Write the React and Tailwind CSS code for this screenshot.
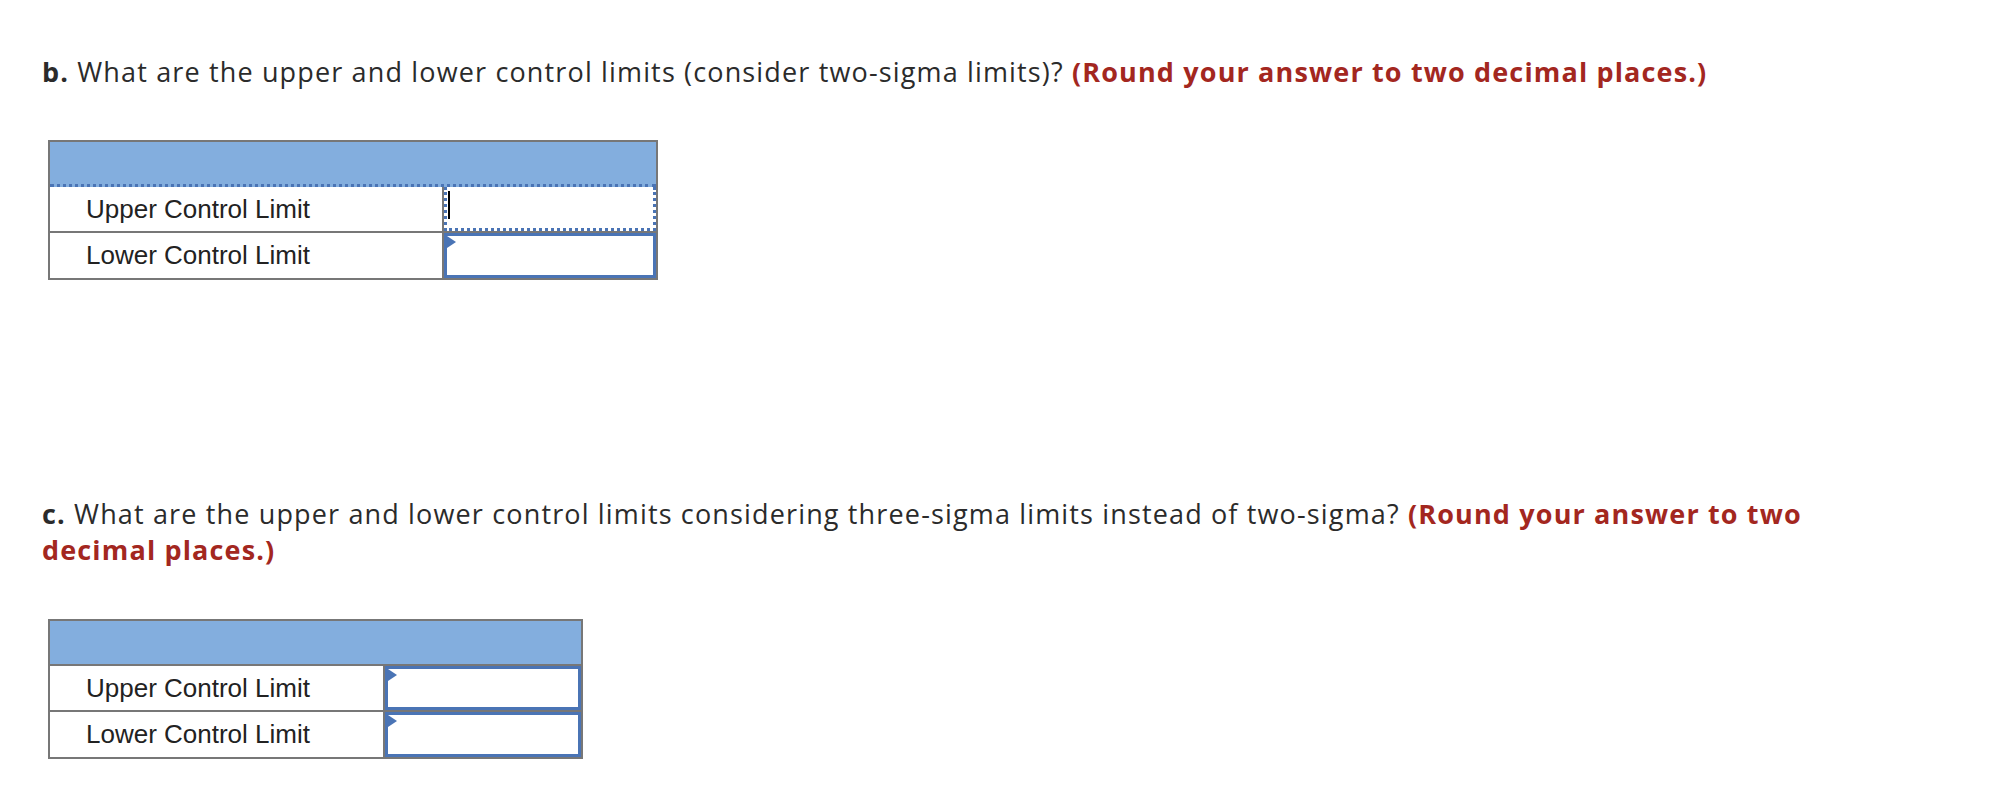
import React from 'react';

const Marker = () => (
  <span className="absolute left-0 top-0 w-0 h-0 border-t-[6px] border-b-[6px] border-l-[9px] border-t-transparent border-b-transparent border-l-[#4a74b5]"></span>
);

const InputCell = ({ focused }) =>
  focused ? (
    <div className="relative h-full border-[3px] border-dotted border-t-0 border-[#4a74b5] bg-white">
      <span className="absolute left-[1px] top-[4px] w-[2px] h-[28px] bg-black"></span>
    </div>
  ) : (
    <div className="relative h-full border-[3px] border-[#4a74b5] bg-white">
      <Marker />
    </div>
  );

const LimitTable = ({ width, labelWidth, focusFirst }) => (
  <div
    className="border-2 border-[#777777] bg-white"
    style={{ width: width }}
  >
    <div
      className={`h-[45px] bg-[#83aede] ${
        focusFirst ? 'border-b-[3px] border-dotted border-[#4a74b5]' : 'border-b-2 border-[#777777]'
      }`}
    ></div>
    <div className="flex h-[46px] border-b-2 border-[#777777]">
      <div
        className="flex items-center pl-[36px] text-[26px] text-[#222] border-r-2 border-[#777777]"
        style={{ width: labelWidth, fontFamily: '"Liberation Sans", Arial, sans-serif' }}
      >
        Upper Control Limit
      </div>
      <div className="flex-1">
        <InputCell focused={focusFirst} />
      </div>
    </div>
    <div className="flex h-[45px]">
      <div
        className="flex items-center pl-[36px] text-[26px] text-[#222] border-r-2 border-[#777777]"
        style={{ width: labelWidth, fontFamily: '"Liberation Sans", Arial, sans-serif' }}
      >
        Lower Control Limit
      </div>
      <div className="flex-1">
        <InputCell />
      </div>
    </div>
  </div>
);

export default function App() {
  return (
    <div
      className="min-h-[806px] bg-white pt-[54px] pl-[42px] text-[#2b2b2b] tracking-[1.15px]"
      style={{ fontFamily: '"Open Sans", Lato, sans-serif' }}
    >
      <p className="text-[27px] leading-[36px]">
        <b className="font-bold">b.</b> What are the upper and lower control limits (consider two-sigma limits)?{' '}
        <b className="font-bold text-[#a3271f]">(Round your answer to two decimal places.)</b>
      </p>

      <div className="mt-[50px] ml-[6px] tracking-normal">
        <LimitTable width={610} labelWidth={394} focusFirst />
      </div>

      <p className="mt-[216px] w-[1830px] text-[27px] leading-[36px]">
        <b className="font-bold">c.</b> What are the upper and lower control limits considering three-sigma limits instead of two-sigma?{' '}
        <b className="font-bold text-[#a3271f]">(Round your answer to two decimal places.)</b>
      </p>

      <div className="mt-[51px] ml-[6px] tracking-normal">
        <LimitTable width={535} labelWidth={335} />
      </div>
    </div>
  );
}
